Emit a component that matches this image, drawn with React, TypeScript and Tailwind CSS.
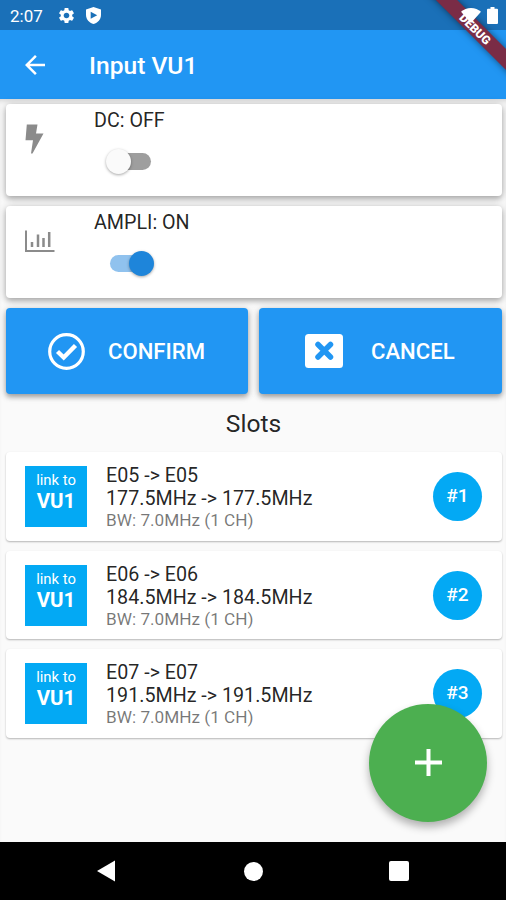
import { useState } from 'react'
import { MdArrowBack, MdSettings } from 'react-icons/md'

const slots = [
  { id: 1, channel: 'E05 -> E05', frequency: '177.5MHz -> 177.5MHz', bandwidth: 'BW: 7.0MHz (1 CH)' },
  { id: 2, channel: 'E06 -> E06', frequency: '184.5MHz -> 184.5MHz', bandwidth: 'BW: 7.0MHz (1 CH)' },
  { id: 3, channel: 'E07 -> E07', frequency: '191.5MHz -> 191.5MHz', bandwidth: 'BW: 7.0MHz (1 CH)' }
]

function StatusBar() {
  return (
    <div className="flex h-[30px] shrink-0 items-center bg-[#1a70b8] pl-2.5 pr-2 text-white">
      <span className="w-[47px] pt-0.5 text-[17px] leading-none">2:07</span>
      <MdSettings className="h-[19px] w-[19px]" />
      <svg className="ml-[10px] h-[17px] w-[15px]" viewBox="0 0 15 17">
        <path fill="currentColor" d="M7.5 0 15 2.6V8c0 4.3-3.2 7.8-7.5 9C3.2 15.800 0 12.300 0 8V2.6z" />
        <path fill="#1a70b8" d="M4.7 4.8 11.2 8.3 4.7 11.800z" />
      </svg>
      <div className="relative z-20 ml-auto flex items-center gap-[6px]">
        <svg className="h-[15px] w-[20px]" viewBox="0 0 20 15">
          <path fill="currentColor" d="M10 15 0 3.800C2.7 1.300 6.200 0 10 0s7.300 1.300 10 3.800z" />
        </svg>
        <svg className="h-[17px] w-[11px]" viewBox="0 0 11 17">
          <path fill="currentColor" d="M3.500 0h4v1.700H10a1 1 0 0 1 1 1V16a1 1 0 0 1-1 1H1a1 1 0 0 1-1-1V2.700a1 1 0 0 1 1-1h2.500z" />
        </svg>
      </div>
    </div>
  )
}

function DebugBanner() {
  return (
    <div className="pointer-events-none absolute right-0 top-0 z-10 h-24 w-24 overflow-hidden">
      <div className="absolute -right-[35px] top-[22px] flex h-[15px] w-[130px] rotate-45 items-center justify-center bg-[#7a2c46] pr-[2px] text-[12px] font-black leading-none text-white shadow-[0_0_7px_rgba(0,0,0,0.5)]">
        DEBUG
      </div>
    </div>
  )
}

function Toggle({ on, onChange }: { on: boolean; onChange: () => void }) {
  return (
    <button
      role="switch"
      aria-checked={on}
      onClick={onChange}
      className={`flex h-[17px] w-[41px] items-center rounded-full ${on ? 'justify-end bg-[#90c2ee]' : 'justify-start bg-[#9e9e9e]'}`}
    >
      <span
        className={`h-[25px] w-[25px] shrink-0 rounded-full shadow-[0_1px_3px_rgba(0,0,0,0.35)] ${on ? 'translate-x-[3px] bg-[#1e85da]' : '-translate-x-[4px] bg-[#fafafa]'}`}
      />
    </button>
  )
}

function BoltIcon() {
  return (
    <svg className="h-[30px] w-[19px]" viewBox="0 0 19 30">
      <path fill="#8b8b8b" d="M1.800 0.500H12.500L11 9.500H18.500L7.500 29.500H6L8 16.200H0.500z" />
    </svg>
  )
}

function ChartIcon() {
  return (
    <svg className="mt-[4px] h-[23px] w-[30px]" viewBox="0 0 30 23">
      <path fill="none" stroke="#8b8b8b" strokeWidth="2" d="M1 0.500V21H29.500" />
      <path fill="none" stroke="#8b8b8b" strokeWidth="2.500" d="M7 17v-5M13 17V4.500M18.500 17V8M24.200 17V2" />
    </svg>
  )
}

export default function App() {
  const [dc, setDc] = useState(false)
  const [ampli, setAmpli] = useState(true)

  const settings = [
    { label: 'DC', on: dc, toggle: () => setDc(!dc), icon: <BoltIcon /> },
    { label: 'AMPLI', on: ampli, toggle: () => setAmpli(!ampli), icon: <ChartIcon /> }
  ]

  return (
    <div className="relative flex h-[900px] w-[506px] flex-col overflow-hidden bg-[#fafafa] font-['Roboto',sans-serif]">
      <StatusBar />
      <DebugBanner />

      {/* App bar */}
      <header className="flex h-[69px] shrink-0 items-center bg-[#2196f3] pl-[20px] text-white">
        <MdArrowBack className="h-[30px] w-[30px]" />
        <h1 className="ml-[39px] pt-[3px] text-[24.6px] font-medium">Input VU1</h1>
      </header>

      <main className="flex flex-1 flex-col pl-[5.5px] pr-[4.5px] pt-[5px] shadow-[inset_0_5px_5px_-3px_rgba(0,0,0,0.15)]">
        {/* Settings */}
        <div className="flex flex-col gap-[10px]">
          {settings.map((item) => (
            <div
              key={item.label}
              className="flex h-[92px] rounded-[4px] bg-white shadow-[0_3px_5px_rgba(0,0,0,0.2),0_1px_10px_rgba(0,0,0,0.22)]"
            >
              <div className="w-[88.5px] pl-[19.5px] pt-[20px]">{item.icon}</div>
              <div className="pt-[5px]">
                <p className="text-[19.7px] leading-[23px] text-black/87">
                  {item.label}: {item.on ? 'ON' : 'OFF'}
                </p>
                <div className="ml-[16px] mt-[21px]">
                  <Toggle on={item.on} onChange={item.toggle} />
                </div>
              </div>
            </div>
          ))}
        </div>

        {/* Actions */}
        <div className="mt-[10px] grid grid-cols-2 gap-[11px] text-[22.1px] font-medium text-white">
          <button className="flex h-[86px] items-center rounded-[4px] bg-[#2196f3] pl-[42.5px] shadow-[0_3px_5px_rgba(0,0,0,0.3),0_1px_10px_rgba(0,0,0,0.15)]">
            <svg className="h-[37px] w-[37px]" viewBox="0 0 37 37" fill="none" stroke="currentColor">
              <circle cx="18.500" cy="18.500" r="16.800" strokeWidth="3.200" />
              <path strokeWidth="4.400" d="m9.500 18.500 6.200 6L27.500 12.500" />
            </svg>
            <span className="ml-[23px] pt-[2px]">CONFIRM</span>
          </button>
          <button className="flex h-[86px] items-center rounded-[4px] bg-[#2196f3] pl-[46px] shadow-[0_3px_5px_rgba(0,0,0,0.3),0_1px_10px_rgba(0,0,0,0.15)]">
            <svg className="h-[34px] w-[38px]" viewBox="0 0 38 34">
              <rect width="38" height="34" rx="3.500" fill="currentColor" />
              <path fill="none" stroke="#2196f3" strokeWidth="5.500" strokeLinecap="round" d="m13 10.500 12.500 12.500m0-12.500-12.500 12.500" />
            </svg>
            <span className="ml-[28px] pt-[2px]">CANCEL</span>
          </button>
        </div>

        <h2 className="mt-[15px] text-center text-[24.6px] leading-[29px] text-black/87">Slots</h2>

        {/* Slots */}
        <div className="mt-[14px] flex flex-col gap-[10px]">
          {slots.map((slot) => (
            <div
              key={slot.id}
              className="flex h-[88.5px] rounded-[4px] bg-white pl-[19.5px] pr-[19.5px] shadow-[0_1px_2px_rgba(0,0,0,0.28)]"
            >
              <div className="mt-[14px] flex h-[61px] w-[62px] flex-col items-center bg-[#03a9f4] pt-[5px] text-white">
                <span className="text-[14.8px] leading-[19px]">link to</span>
                <span className="text-[20.5px] font-bold leading-[22px]">VU1</span>
              </div>
              <div className="ml-[19px] pt-[12px]">
                <p className="text-[19.7px] leading-[23px] text-black/87">{slot.channel}</p>
                <p className="text-[19.7px] leading-[23px] text-black/87">{slot.frequency}</p>
                <p className="text-[17.2px] leading-[20px] text-black/54">{slot.bandwidth}</p>
              </div>
              <div className="ml-auto mt-[20px] flex h-[49px] w-[49px] items-center justify-center rounded-full bg-[#03a9f4] text-[19px] font-medium text-white">
                #{slot.id}
              </div>
            </div>
          ))}
        </div>
      </main>

      {/* Add slot */}
      <button className="absolute bottom-[78px] right-[19px] flex h-[118px] w-[118px] items-center justify-center rounded-full bg-[#4caf50] pb-[1px] text-white shadow-[0_5px_8px_rgba(0,0,0,0.3)]">
        <svg className="h-[27px] w-[27px]" viewBox="0 0 27 27" stroke="currentColor" strokeWidth="4">
          <path d="M13.500 0v27M0 13.500h27" />
        </svg>
      </button>

      {/* Navigation bar */}
      <nav className="flex h-[58px] shrink-0 items-center bg-black text-white">
        <svg className="ml-[97px] h-[22px] w-[18px]" viewBox="0 0 18 22">
          <path fill="currentColor" d="M18 0.500v21L0 11z" />
        </svg>
        <span className="ml-[129px] h-[19px] w-[19px] rounded-full bg-white" />
        <span className="ml-[126px] h-[20px] w-[20px] rounded-[2px] bg-white" />
      </nav>
    </div>
  )
}
